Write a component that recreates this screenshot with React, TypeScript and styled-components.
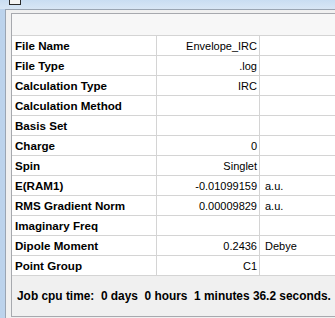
import React from 'react';
import styled, { createGlobalStyle } from 'styled-components';

const GlobalStyle = createGlobalStyle`
  html, body {
    margin: 0;
    padding: 0;
  }
  body {
    width: 335px;
    height: 318px;
    overflow: hidden;
    font-family: "Liberation Sans", Arial, sans-serif;
    font-size: 11px;
    color: #000;
  }
`;

const Window = styled.div`
  width: 335px;
  height: 318px;
  display: flex;
  flex-direction: column;
  background: linear-gradient(90deg, #bcd3ec 0%, #d3e3f4 100%);
  overflow: hidden;
`;

const TitleBar = styled.div`
  height: 9px;
  flex: none;
  display: flex;
  align-items: flex-start;
  padding-left: 9px;
  background: linear-gradient(180deg, #c9ddf2 0%, #d8e6f5 100%);
`;

const TitleIcon = styled.div`
  width: 10px;
  height: 4px;
  border: 1px solid #2a2a2a;
  border-top: none;
  background: #f4f4f4;
`;

const Frame = styled.div`
  flex: 1;
  display: flex;
  padding-left: 5px;
`;

const Dialog = styled.div`
  flex: 1;
  border-left: 1px solid #9aa5b3;
  border-top: 1px solid #9aa5b3;
  background: #f0f0f0;
  padding: 3px 0 0 5px;
`;

const Grid = styled.div`
  border: 1px solid #a7a9ae;
  border-right: none;
  background: #fff;
  width: 340px;
`;

const HeaderRow = styled.div`
  height: 21px;
  background: #f7f7f7;
  border-bottom: 1px solid #d4d4d4;
`;

const Row = styled.div`
  display: grid;
  grid-template-columns: 145px 103px 1fr;
  height: 19px;
  border-bottom: 1px solid #d4d4d4;
`;

const Cell = styled.div<{ $align?: 'left' | 'right'; $bold?: boolean }>`
  display: flex;
  align-items: center;
  justify-content: ${p => (p.$align === 'right' ? 'flex-end' : 'flex-start')};
  padding: 0 2px 0 3px;
  font-size: ${p => (p.$bold ? '11.6px' : '11px')};
  font-weight: ${p => (p.$bold ? 700 : 400)};
  white-space: nowrap;
  border-right: 1px solid #d4d4d4;
  &:last-child {
    border-right: none;
    padding-left: 5px;
  }
`;

const Footer = styled.div`
  height: 40px;
  background: #f0f0f0;
  display: flex;
  align-items: center;
  padding-left: 5px;
  font-size: 11.9px;
  font-weight: 700;
  white-space: pre;
`;

const rows: [string, string, string][] = [
  ['File Name', 'Envelope_IRC', ''],
  ['File Type', '.log', ''],
  ['Calculation Type', 'IRC', ''],
  ['Calculation Method', '', ''],
  ['Basis Set', '', ''],
  ['Charge', '0', ''],
  ['Spin', 'Singlet', ''],
  ['E(RAM1)', '-0.01099159', 'a.u.'],
  ['RMS Gradient Norm', '0.00009829', 'a.u.'],
  ['Imaginary Freq', '', ''],
  ['Dipole Moment', '0.2436', 'Debye'],
  ['Point Group', 'C1', ''],
];

export default function App() {
  return (
    <>
      <GlobalStyle />
      <Window>
        <TitleBar>
          <TitleIcon />
        </TitleBar>
        <Frame>
          <Dialog>
            <Grid>
              <HeaderRow />
              {rows.map(([label, value, unit]) => (
                <Row key={label}>
                  <Cell $bold>{label}</Cell>
                  <Cell $align="right">{value}</Cell>
                  <Cell>{unit}</Cell>
                </Row>
              ))}
              <Footer>{'Job cpu time:  0 days  0 hours  1 minutes 36.2 seconds.'}</Footer>
            </Grid>
          </Dialog>
        </Frame>
      </Window>
    </>
  );
}
